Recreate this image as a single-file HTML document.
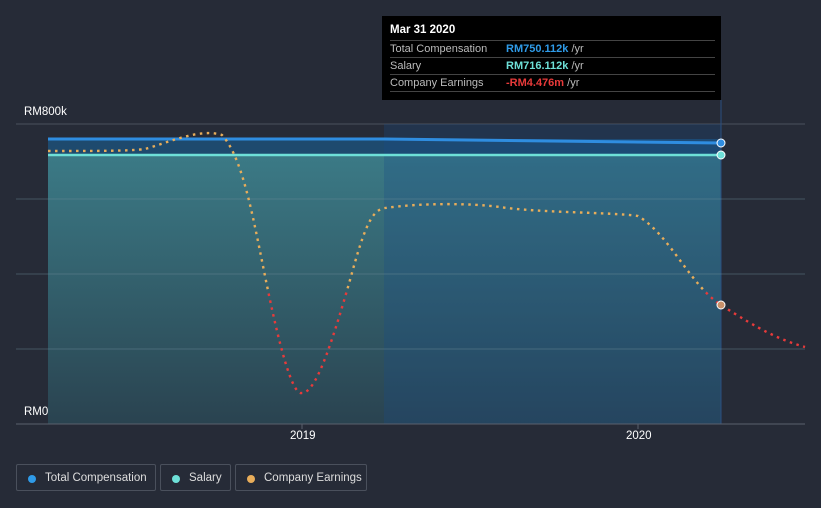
<!DOCTYPE html>
<html><head><style>
body{margin:0;background:#262b37;width:821px;height:508px;overflow:hidden;font-family:"Liberation Sans",sans-serif;position:relative}
.tt{position:absolute;left:382px;top:16px;width:339px;height:84px;background:#000;color:#fff;font-size:11px}
.tt .h{position:absolute;left:8px;top:8px;font-weight:bold;font-size:11.5px}
.row{position:absolute;left:8px;width:325px;border-top:1px solid #444;height:17px;line-height:16px;color:#bbb}
.row span{position:absolute;left:116px}
.leg{position:absolute;top:464px;height:27px;border:1px solid #4a505c;border-radius:2px;color:#ddd;font-size:11.5px;line-height:27px;box-sizing:border-box;white-space:nowrap}
.leg i{position:absolute;left:11px;top:10px;width:8px;height:8px;border-radius:50%}
.leg b{font-weight:normal;position:absolute;left:28px;white-space:nowrap}
.ax{position:absolute;color:#fff;font-size:11.5px}
</style></head><body>
<svg width="821" height="508" style="position:absolute;left:0;top:0">
<defs>
<linearGradient id="f" x1="0" y1="0" x2="0" y2="1"><stop offset="0" stop-color="#3b7a86"/><stop offset="1" stop-color="#2a4350"/></linearGradient>
<linearGradient id="e" gradientUnits="userSpaceOnUse" x1="0" y1="0" x2="0" y2="508"><stop offset="0.575" stop-color="#e8ad5a"/><stop offset="0.575" stop-color="#e83a3a"/></linearGradient>
</defs>
<line x1="16" y1="124" x2="805" y2="124" stroke="#4a505c"/>
<rect x="48" y="139" width="673" height="16" fill="#1e4a6e"/>
<rect x="48" y="155" width="673" height="269" fill="url(#f)"/>
<rect x="384" y="124" width="337" height="300" fill="#1a4a8a" opacity="0.28"/>
<line x1="721" y1="100" x2="721" y2="424" stroke="#2a4f80"/>
<g stroke="#6a8a96" stroke-opacity="0.45"><line x1="16" y1="199" x2="805" y2="199"/><line x1="16" y1="274" x2="805" y2="274"/><line x1="16" y1="349" x2="805" y2="349"/></g>
<line x1="16" y1="424" x2="805" y2="424" stroke="#5a606c"/>
<line x1="302" y1="424" x2="302" y2="429" stroke="#5a606c"/><line x1="638" y1="424" x2="638" y2="429" stroke="#5a606c"/>
<path d="M48 139 L384 139 L721 143" stroke="#2f8de0" stroke-width="3" fill="none"/>
<line x1="48" y1="155" x2="721" y2="155" stroke="#6ee0d8" stroke-width="2.5"/>
<path d="M48 151 C100 151 130 151 145 149 C170 142 200 128 222 135 C245 160 255 230 270 300 C285 370 295 395 302 393 C315 393 330 350 350 280 C365 225 372 210 385 208 C420 203 470 203 500 207 C540 213 610 212 638 216 C670 235 690 285 721 305 C760 330 780 340 805 347" stroke="url(#e)" stroke-width="2.4" stroke-dasharray="2.5 4.5" fill="none"/>
<circle cx="721" cy="143" r="4" fill="#2f8de0" stroke="#fff" stroke-width="1"/>
<circle cx="721" cy="155" r="4" fill="#6ee0d8" stroke="#fff" stroke-width="1"/>
<circle cx="721" cy="305" r="4" fill="#c8906a" stroke="#fff" stroke-width="1"/>
</svg>
<div class="ax" style="left:24px;top:106px">RM800k</div>
<div class="ax" style="left:24px;top:406px">RM0</div>
<div class="ax" style="left:290px;top:430px">2019</div>
<div class="ax" style="left:626px;top:430px">2020</div>
<div class="tt"><div class="h">Mar 31 2020</div>
<div class="row" style="top:24px">Total Compensation<span style="color:#2f9be8"><b>RM750.112k</b> <font color="#bbb">/yr</font></span></div>
<div class="row" style="top:41px">Salary<span style="color:#6ee0d8"><b>RM716.112k</b> <font color="#bbb">/yr</font></span></div>
<div class="row" style="top:58px">Company Earnings<span style="color:#e83a3a"><b>-RM4.476m</b> <font color="#bbb">/yr</font></span></div>
<div class="row" style="top:75px;height:0"></div>
</div>
<div class="leg" style="left:16px;width:140px"><i style="background:#2f9be8"></i><b>Total Compensation</b></div>
<div class="leg" style="left:160px;width:71px"><i style="background:#6ee0d8"></i><b>Salary</b></div>
<div class="leg" style="left:235px;width:132px"><i style="background:#e8ad5a"></i><b>Company Earnings</b></div>
</body></html>
